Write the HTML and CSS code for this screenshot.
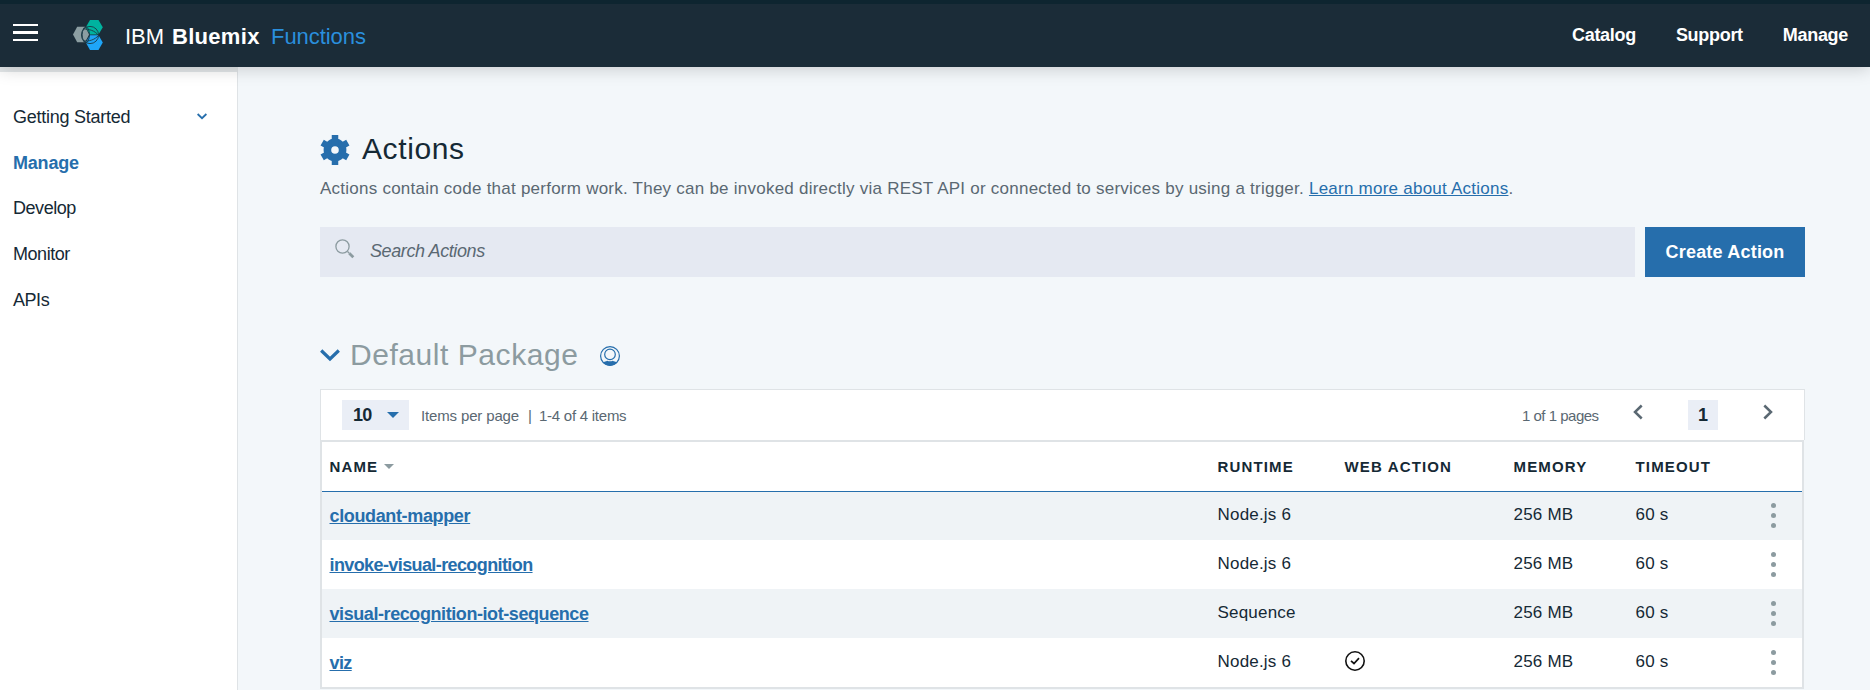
FILE: index.html
```html
<!DOCTYPE html>
<html lang="en">
<head>
<meta charset="utf-8">
<title>Actions - IBM Bluemix Functions</title>
<link rel="stylesheet" href="styles.css">
</head>
<body>
<header class="topbar">
  <button class="menu" aria-label="Menu"><span></span><span></span><span></span></button>
  <svg class="logo" width="32" height="32" viewBox="0 0 32 32">
    <path d="M1 15.500l4.200-7.800h7.800l4.200 7.800-4.200 7.800H5.200z" fill="#8c9ea2"/>
    <path d="M18 1h8.500l4.300 7.300-4.300 7.300H18l-4.200-7.300z" fill="#00b39f"/>
    <path d="M18 16.200h8.500l4.300 7.300-4.300 7.400H18l-4.200-7.400z" fill="#1ea5f8"/>
    <g fill="none" stroke="#1b3a46" stroke-width=".9"><circle cx="18" cy="16" r="8.600"/><ellipse cx="13.800" cy="15.800" rx="3.600" ry="8"/><path d="M11 10c6 0 12 1.500 15.500 6.500M11 21.500c6 1.500 12-1 15.500-5"/></g>
  </svg>
  <div class="brand"><span class="ibm">IBM</span> <b>Bluemix</b> <span class="product">Functions</span></div>
  <nav class="topnav"><a>Catalog</a><a>Support</a><a>Manage</a></nav>
</header>
<div class="layout">
  <aside class="sidebar">
    <a class="started">Getting Started <svg width="10" height="7" viewBox="0 0 10 7"><path d="M.6 1l4.400 4.200L9.400 1" fill="none" stroke="#266eac" stroke-width="1.800"/></svg></a>
    <a class="active">Manage</a>
    <a>Develop</a>
    <a>Monitor</a>
    <a>APIs</a>
  </aside>
  <main class="content">
    <h1 class="title"><svg width="30" height="30" viewBox="0 0 30 30"><g stroke="#266eac" stroke-width="6.500"><circle cx="15" cy="15" r="7.600" fill="none" stroke-width="7.600"/><path d="M15 0v9M15 21v9"/><path d="M15 .2v8.600M15 21v8.800" transform="rotate(60 15 15)"/><path d="M15 .2v8.600M15 21v8.800" transform="rotate(120 15 15)"/></g></svg><span>Actions</span></h1>
    <p class="intro">Actions contain code that perform work. They can be invoked directly via REST API or connected to services by using a trigger. <a>Learn more about Actions</a>.</p>
    <div class="tools">
      <div class="search"><svg width="20" height="20" viewBox="0 0 20 20"><circle cx="7.500" cy="7.500" r="6.600" fill="none" stroke="#8c9ba0" stroke-width="1.300"/><path d="M12.500 12.500l1.800 1.800" stroke="#8c9ba0" stroke-width="1.300"/><path d="M14.300 14.300l4 4" stroke="#8c9ba0" stroke-width="2.800"/></svg><span>Search Actions</span></div>
      <button class="create">Create Action</button>
    </div>
    <h2 class="package">
      <svg width="20" height="14" viewBox="0 0 20 14"><path d="M1.200 2.500L10 11 18.800 2.500" fill="none" stroke="#266eac" stroke-width="3.200"/></svg>
      <span>Default Package</span>
      <svg width="20" height="20" viewBox="0 0 20 20"><circle cx="10" cy="10" r="9.400" fill="none" stroke="#266eac" stroke-width="1.200"/><circle cx="10" cy="8.400" r="5.300" fill="none" stroke="#266eac" stroke-width="1.200"/><path d="M2.500 16c2 0 3.500-.8 4.700-1.300 1.800.8 3.800.8 5.600 0 1.200.5 2.700 1.300 4.700 1.300-3.500 5-11.500 5-15 0z" fill="#266eac"/></svg>
    </h2>
    <div class="pager">
      <div class="size">10<svg width="12" height="6" viewBox="0 0 12 6"><path d="M0 0h12L6 6z" fill="#266eac"/></svg></div>
      <span class="per">Items per page</span><span class="bar">|</span><span class="range">1-4 of 4 items</span>
      <span class="pages">1 of 1 pages</span>
      <svg class="prev" width="10" height="16" viewBox="0 0 10 16"><path d="M8.700 1.500L2 8l6.700 6.500" fill="none" stroke="#5a6872" stroke-width="2.500"/></svg>
      <span class="page">1</span>
      <svg class="next" width="10" height="16" viewBox="0 0 10 16"><path d="M1.300 1.500L8 8l-6.700 6.500" fill="none" stroke="#5a6872" stroke-width="2.500"/></svg>
    </div>
    <div class="table">
      <div class="row head"><span class="sort">NAME<svg width="10" height="5" viewBox="0 0 10 5"><path d="M0 0h10L5 5z" fill="#8c9ba0"/></svg></span><span>RUNTIME</span><span>WEB ACTION</span><span>MEMORY</span><span>TIMEOUT</span></div>
      <div class="row"><a>cloudant-mapper</a><span>Node.js 6</span><span></span><span>256 MB</span><span>60 s</span><i class="dots"><b></b><b></b><b></b></i></div>
      <div class="row"><a class="tight">invoke-visual-recognition</a><span>Node.js 6</span><span></span><span>256 MB</span><span>60 s</span><i class="dots"><b></b><b></b><b></b></i></div>
      <div class="row"><a>visual-recognition-iot-sequence</a><span>Sequence</span><span></span><span>256 MB</span><span>60 s</span><i class="dots"><b></b><b></b><b></b></i></div>
      <div class="row"><a class="tight">viz</a><span>Node.js 6</span><span class="check"><svg width="20" height="20" viewBox="0 0 20 20"><circle cx="10" cy="10" r="9.200" fill="none" stroke="#111" stroke-width="1.600"/><path d="M6 9.800l3 2.700 5-5.300" fill="none" stroke="#111" stroke-width="1.700"/></svg></span><span>256 MB</span><span>60 s</span><i class="dots"><b></b><b></b><b></b></i></div>
    </div>
  </main>
</div>
</body>
</html>
```

FILE: styles.css
```css
* { box-sizing: border-box; }
body { margin: 0; height: 690px; overflow: hidden; background: #f3f7fa; color: #152935; font-family: "Liberation Sans", Arial, sans-serif; font-size: 17px; }
button { border: 0; padding: 0; background: none; font: inherit; }
svg { display: block; flex: none; }
.topbar { position: relative; z-index: 1; display: flex; align-items: flex-start; height: 67px; padding: 0 22px 0 13px; background: #1b2c38; border-top: 4px solid #0e2530; box-shadow: 0 2px 16px rgba(0,0,0,.18); color: #fff; white-space: nowrap; }
.menu { display: flex; flex-direction: column; justify-content: space-between; width: 25px; height: 17px; margin-top: 20px; }
.menu span { height: 2px; background: #fff; }
.menu span:nth-child(2) { height: 3px; }
.logo { margin: 15px 0 0 34px; }
.brand { display: flex; margin: 20px 0 0 21px; font-size: 22px; line-height: 25px; }
.ibm { width: 47px; }
.brand b { width: 99px; letter-spacing: .3px; }
.product { color: #2a8fdd; letter-spacing: -.05px; }
.topnav { display: flex; gap: 40px; margin: 21px 0 0 auto; font-size: 18px; line-height: 21px; font-weight: 700; letter-spacing: -.3px; }
.layout { display: flex; height: 623px; }
.sidebar { width: 238px; flex: none; padding-top: 27px; background: #fff; border-top: 5px solid #e3e7e9; border-right: 1px solid #dfe3e6; }
.sidebar a { display: flex; align-items: center; height: 45.700px; padding-left: 13px; padding-bottom: 9px; font-size: 18px; letter-spacing: -.45px; }
.sidebar .started { justify-content: space-between; padding-right: 30px; letter-spacing: -.25px; }
.started svg { margin-bottom: 2px; }
.sidebar .active { color: #266eac; font-weight: 700; letter-spacing: -.2px; }
.content { width: 1485px; margin-left: 82px; }
.title { display: flex; gap: 12px; margin: 65px 0 0; height: 36px; font-size: 30px; line-height: 34px; font-weight: 400; letter-spacing: .6px; }
.title svg { margin-top: 3px; }
.intro { margin: 11px 0 0; height: 48px; line-height: 20px; font-size: 17px; color: #5a6872; letter-spacing: .24px; white-space: nowrap; }
.intro a { color: #266eac; text-decoration: underline; }
.tools { display: flex; gap: 10px; height: 50px; }
.search { display: flex; flex: 1; padding: 12px 15px; gap: 15px; background: #e5e9f2; color: #5a6872; font-size: 18px; font-style: italic; letter-spacing: -.4px; line-height: 25px; }
.create { width: 160px; background: #266eac; color: #fff; font-size: 18px; font-weight: 700; letter-spacing: .2px; }
.package { display: flex; height: 112px; margin: 0; padding-top: 61px; font-size: 30px; line-height: 34px; font-weight: 400; letter-spacing: .55px; color: #8c9ba0; }
.package svg { margin-top: 10px; }
.package span { width: 250px; margin-left: 10px; }
.package svg:last-child { margin-top: 8px; }
.pager { display: flex; align-items: center; height: 51px; padding: 0 31px 0 21px; background: #fff; border: 1px solid #dfe3e6; border-bottom: 0; font-size: 15px; color: #5a6872; letter-spacing: -.15px; white-space: nowrap; }
.size { display: flex; align-items: center; justify-content: space-between; width: 67px; height: 30px; padding: 0 10px 0 11px; background: #eaeef6; color: #152935; font-size: 18px; font-weight: 700; letter-spacing: -.8px; }
.per { margin-left: 12px; width: 107px; }
.bar { width: 11px; }
.range { letter-spacing: -.25px; }
.pages { width: 111px; margin-left: auto; letter-spacing: -.5px; }
.prev, .next { margin-bottom: 6px; }
.page { width: 30px; height: 30px; margin: 0 45px; background: #eaeef6; color: #152935; font-size: 18px; line-height: 31px; font-weight: 700; text-align: center; }
.table { width: 1484px; height: 249px; border: 2px solid #dfe3e6; background: #fff; }
.row { display: grid; grid-template-columns: 888px 127px 169px 122px 129px auto; height: 49px; padding-left: 7.500px; line-height: 46px; letter-spacing: .2px; white-space: nowrap; }
.row:nth-child(even) { background: #eff3f6; }
.row:nth-child(2) { height: 48px; }
.row:nth-child(n+3) { line-height: 48px; }
.row a { color: #266eac; font-size: 18px; line-height: 50px; font-weight: 700; letter-spacing: -.42px; text-decoration: underline; }
.row:nth-child(2) a { line-height: 48px; letter-spacing: -.36px; }
.row .tight { letter-spacing: -.6px; }
.row.head { height: 50px; border-bottom: 1px solid #266eac; font-size: 15px; font-weight: 700; line-height: 49px; letter-spacing: 1.150px; }
.sort { display: flex; align-items: center; gap: 6px; }
.check { padding-top: 13px; }
.dots { display: flex; flex-direction: column; gap: 5px; padding: 12px 0 0 6px; }
.row:nth-child(2) .dots { padding-top: 11px; }
.dots b { width: 5px; height: 5px; border-radius: 50%; background: #8c9ba0; }
```
